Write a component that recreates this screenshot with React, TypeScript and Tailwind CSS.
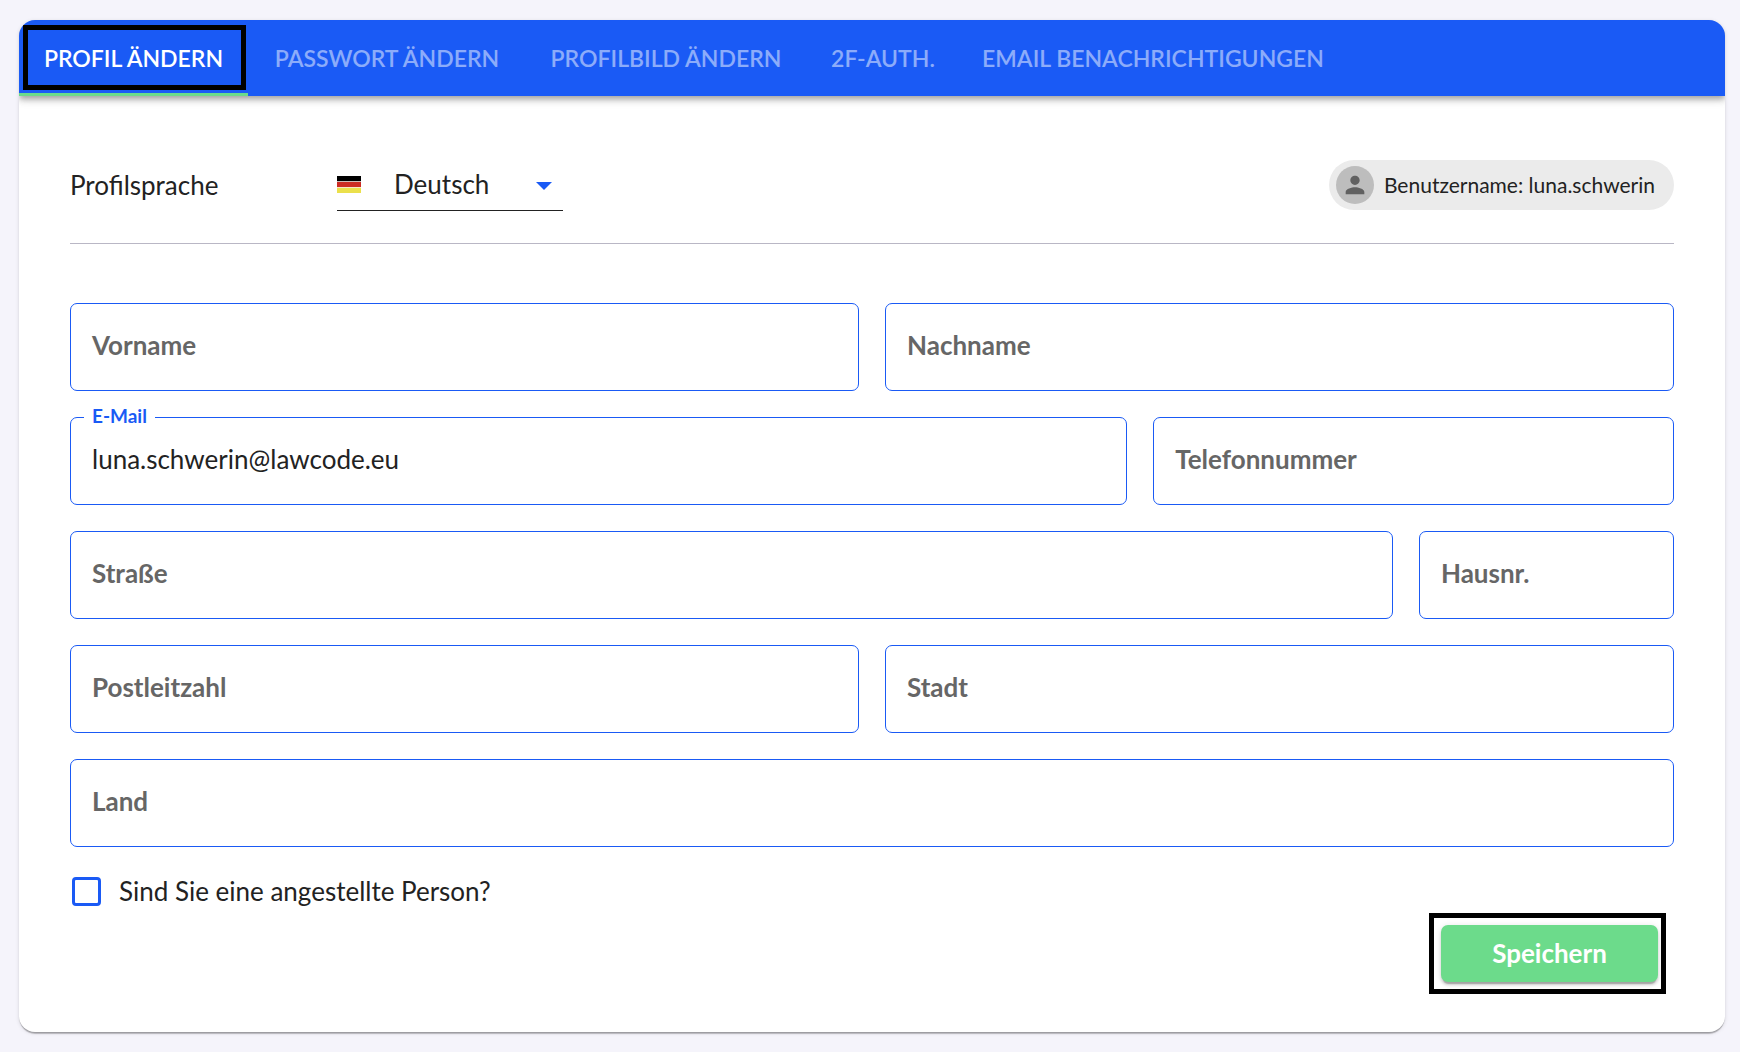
import { useState } from 'react';
import { clsx } from 'clsx';

const tabs = [
  { label: 'PROFIL ÄNDERN', width: 'w-[229px]' },
  { label: 'PASSWORT ÄNDERN', width: 'w-[278px]' },
  { label: 'PROFILBILD ÄNDERN', width: 'w-[280px]' },
  { label: '2F-AUTH.', width: 'w-[154px]' },
  { label: 'EMAIL BENACHRICHTIGUNGEN', width: 'w-[386px]' },
];

type FieldProps = {
  id: string;
  label: string;
  type?: string;
  defaultValue?: string;
};

function Field({ id, label, type = 'text', defaultValue = '' }: FieldProps) {
  const [value, setValue] = useState(defaultValue);
  const filled = value !== '';

  return (
    <div className="relative">
      <input
        id={id}
        type={type}
        value={value}
        onChange={(e) => setValue(e.target.value)}
        className="block h-[88px] w-full rounded-[7px] border border-[#1a5af5] bg-white px-[21px] pb-1 text-[26px] text-[#222222] outline-none"
      />
      <label
        htmlFor={id}
        className={clsx(
          'pointer-events-none absolute font-bold',
          filled
            ? '-top-[13px] left-[14px] bg-white px-2 text-[19px] leading-6 text-[#1a5af5]'
            : 'left-[22px] top-6 text-[26px] leading-9 text-[#666666]'
        )}
      >
        {label}
      </label>
    </div>
  );
}

function GermanFlag() {
  return (
    <svg viewBox="0 0 24 17" className="pointer-events-none absolute left-0 top-4 h-[17px] w-6" aria-hidden="true">
      <rect width="24" height="5.2" fill="#000000" />
      <rect y="5.9" width="24" height="5.2" fill="#cc2b24" />
      <rect y="11.8" width="24" height="5.2" fill="#ebe04c" />
    </svg>
  );
}

function UserChip({ name }: { name: string }) {
  return (
    <div className="flex h-[50px] items-center rounded-full bg-[#ebebeb] pl-[7px] pr-[19px]">
      <span className="flex size-[38px] items-center justify-center rounded-full bg-[#bdbdbd]">
        <svg viewBox="0 0 24 24" className="size-7" fill="#616161" aria-hidden="true">
          <path d="M12 12c2.21 0 4-1.79 4-4s-1.79-4-4-4-4 1.79-4 4 1.79 4 4 4zm0 2c-2.67 0-8 1.34-8 4v2h16v-2c0-2.66-5.33-4-8-4z" />
        </svg>
      </span>
      <span className="ml-[10px] text-[21px] leading-8 text-[#222222]">Benutzername: {name}</span>
    </div>
  );
}

export default function App() {
  const [activeTab, setActiveTab] = useState('PROFIL ÄNDERN');

  return (
    <div className="min-h-screen bg-[#f5f4fb] py-5 pl-[19px] pr-[15px] font-['Lato',sans-serif]">
      <div className="overflow-hidden rounded-2xl bg-white shadow-[0_3px_1px_-1px_rgba(0,0,0,0.2),0_1px_1px_0_rgba(0,0,0,0.14),0_1px_4px_0_rgba(0,0,0,0.12)]">
        <nav
          className="flex h-[76px] bg-[#1a5af5] shadow-[0_3px_5px_-1px_rgba(0,0,0,0.2),0_5px_6px_0_rgba(0,0,0,0.14),0_1px_13px_0_rgba(0,0,0,0.12)]"
          aria-label="Profil"
        >
          {tabs.map((tab) => (
            <button
              key={tab.label}
              type="button"
              onClick={() => setActiveTab(tab.label)}
              className={clsx(
                'relative flex items-center justify-center whitespace-nowrap text-[23px] font-semibold',
                tab.width,
                activeTab === tab.label ? 'text-white' : 'text-white/50'
              )}
            >
              {tab.label}
              {activeTab === tab.label && (
                <>
                  <span className="absolute inset-x-0 bottom-0 h-[3px] bg-[#6cdb8b]" />
                  <span className="absolute bottom-[6px] left-1 right-[2px] top-[5px] border-5 border-black" />
                </>
              )}
            </button>
          ))}
        </nav>

        <form className="px-[51px] pb-[38px] pt-16" onSubmit={(e) => e.preventDefault()}>
          <div className="flex items-start border-b border-[#b9b7c5] pb-8">
            <label htmlFor="language" className="w-[267px] text-[26px] leading-[50px] text-[#222222]">
              Profilsprache
            </label>
            <div className="relative">
              <GermanFlag />
              <select
                id="language"
                className="block h-[51px] w-[226px] appearance-none border-b border-[#222222] bg-transparent pb-[2px] pl-[57px] text-[26px] text-[#222222] outline-none"
              >
                <option>Deutsch</option>
                <option>English</option>
              </select>
              <svg viewBox="0 0 16 8" className="pointer-events-none absolute right-[11px] top-[22px] h-2 w-4" aria-hidden="true">
                <path d="M0 0h16L8 8z" fill="#1a5af5" />
              </svg>
            </div>
            <div className="ml-auto">
              <UserChip name="luna.schwerin" />
            </div>
          </div>

          <div className="mt-[59px] flex flex-col gap-[26px]">
            <div className="grid grid-cols-2 gap-[26px]">
              <Field id="firstName" label="Vorname" />
              <Field id="lastName" label="Nachname" />
            </div>
            <div className="grid grid-cols-[67fr_33fr] gap-[26px]">
              <Field id="email" label="E-Mail" type="email" defaultValue="luna.schwerin@lawcode.eu" />
              <Field id="phone" label="Telefonnummer" type="tel" />
            </div>
            <div className="grid grid-cols-[83fr_16fr] gap-[26px]">
              <Field id="street" label="Straße" />
              <Field id="houseNumber" label="Hausnr." />
            </div>
            <div className="grid grid-cols-2 gap-[26px]">
              <Field id="zip" label="Postleitzahl" />
              <Field id="city" label="Stadt" />
            </div>
            <Field id="country" label="Land" />
          </div>

          <div className="mt-[30px] flex h-[29px] items-center">
            <input
              id="employee"
              type="checkbox"
              className="ml-[2px] size-[29px] appearance-none rounded-[4px] border-3 border-[#1a5af5] bg-white checked:bg-[#1a5af5]"
            />
            <label htmlFor="employee" className="ml-[18px] text-[26px] leading-[29px] text-[#222222]">
              Sind Sie eine angestellte Person?
            </label>
          </div>

          <div className="mr-2 mt-[7px] flex justify-end">
            <div className="border-5 border-black py-[7px] pl-[7px] pr-[3px]">
              <button
                type="submit"
                className="block h-[57px] w-[217px] rounded-[7px] bg-[#6cdb8b] text-[26px] font-bold text-white shadow-[0_4px_1px_-2px_rgba(0,0,0,0.2),0_3px_3px_0_rgba(0,0,0,0.14),0_1px_6px_0_rgba(0,0,0,0.12)]"
              >
                Speichern
              </button>
            </div>
          </div>
        </form>
      </div>
    </div>
  );
}
